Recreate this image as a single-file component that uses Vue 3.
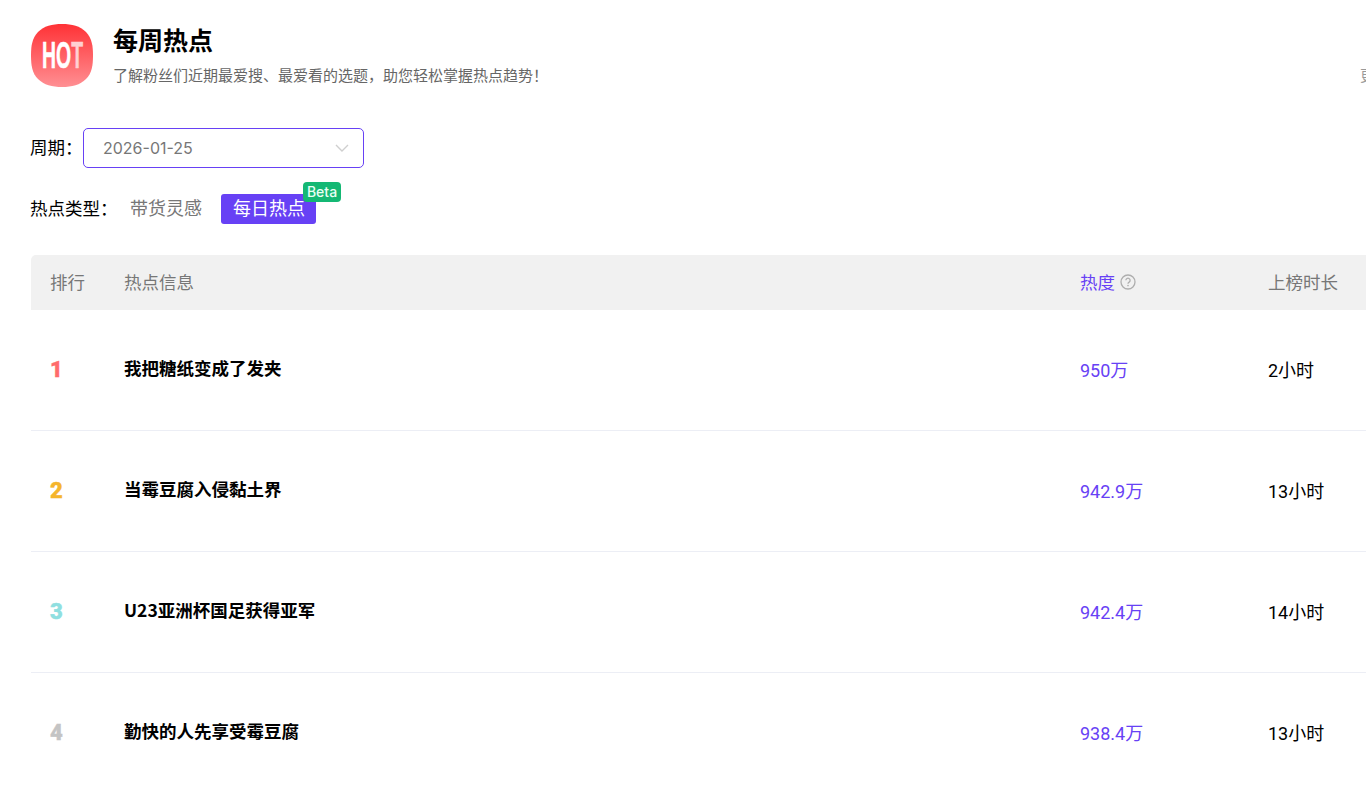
<script setup>
const rows = [
  { rank: 1, title: '我把糖纸变成了发夹', heat: '950万', time: '2小时', cls: 'r1' },
  { rank: 2, title: '当霉豆腐入侵黏土界', heat: '942.9万', time: '13小时', cls: 'r2' },
  { rank: 3, title: 'U23亚洲杯国足获得亚军', heat: '942.4万', time: '14小时', cls: 'r3' },
  { rank: 4, title: '勤快的人先享受霉豆腐', heat: '938.4万', time: '13小时', cls: 'r4' },
]
</script>

<template>
  <div class="viewport">
    <div class="page">
      <header class="head">
        <svg class="logo" width="62" height="63" viewBox="0 0 62 63">
          <defs>
            <linearGradient id="hotg" x1="0" y1="0" x2="0" y2="1">
              <stop offset="0" stop-color="#ff3236" />
              <stop offset="1" stop-color="#ff8f93" />
            </linearGradient>
          </defs>
          <path d="M31 0C41 0 49 2 55 8C61 14.500 62 22 62 31.500C62 41 61 49 55 55C49 61 41 63 31 63C21 63 13 61 7 55C1 49 0 41 0 31.500C0 22 1 14.500 7 8C13 2 21 0 31 0Z" fill="url(#hotg)" />
          <text x="11" y="44" textLength="41" lengthAdjust="spacingAndGlyphs" class="hot">HO<tspan class="hot-t">T</tspan></text>
        </svg>
        <div class="head-text">
          <h1 class="title">每周热点</h1>
          <div class="sub-row">
            <span class="sub">了解粉丝们近期最爱搜、最爱看的选题，助您轻松掌握热点趋势！</span>
            <span class="sub more">更新时间</span>
          </div>
        </div>
      </header>

      <div class="period">
        <span class="label">周期：</span>
        <div class="select">
          <span class="date">2026-01-25</span>
          <svg width="14" height="8" viewBox="0 0 14 8" class="chev"><path d="M1 1l6 6 6-6" fill="none" stroke="#cfcfcf" stroke-width="1.400" /></svg>
        </div>
      </div>

      <div class="types">
        <span class="label">热点类型：</span>
        <span class="tab">带货灵感</span>
        <span class="tab active">每日热点<span class="beta">Beta</span></span>
      </div>

      <div class="table">
        <div class="row thead">
          <div>排行</div>
          <div>热点信息</div>
          <div class="heat-h">热度
            <svg width="16" height="16" viewBox="0 0 16 16" class="q">
              <circle cx="8" cy="8" r="7" fill="none" stroke="#aeaeae" stroke-width="1.300" />
              <path d="M5.900 6.300a2.100 2.100 0 1 1 3.200 1.800c-.7.400-1.100.8-1.100 1.600" fill="none" stroke="#aeaeae" stroke-width="1.300" />
              <circle cx="8" cy="11.600" r=".8" fill="#aeaeae" />
            </svg>
          </div>
          <div>上榜时长</div>
        </div>
        <div v-for="r in rows" :key="r.rank" class="row tbody">
          <div class="rank" :class="r.cls">{{ r.rank }}</div>
          <div class="name">{{ r.title }}</div>
          <div class="heat">{{ r.heat }}</div>
          <div class="time">{{ r.time }}</div>
        </div>
      </div>
    </div>
  </div>
</template>

<style>
html, body { margin: 0; background: #fff; overflow: hidden; }
</style>

<style scoped>
.viewport {
  width: 1366px;
  height: 787px;
  overflow: hidden;
  background: #fff;
  font-family: "Noto Sans CJK SC", "Noto Sans", sans-serif;
  color: #000;
}
.page {
  width: 1600px;
  box-sizing: border-box;
  padding: 24px 0 0 30px;
}
.head { display: flex; align-items: flex-start; height: 63px; }
.logo { margin-left: 1px; flex: none; }
.hot { font-family: "Liberation Sans", sans-serif; font-weight: 700; font-size: 36px; fill: #fff; stroke: #fff; stroke-width: .5px; }
.hot-t { fill: #ffd0d2; stroke: #ffd0d2; }
.head-text { margin-left: 20px; flex: 1; }
.title { margin: 0; font-size: 25px; line-height: 34px; font-weight: 700; transform: translateY(-2px); }
.sub-row { display: flex; margin-top: 6px; width: 1247px; justify-content: space-between; white-space: nowrap; }
.sub { font-size: 15px; line-height: 22px; color: #666; }
.more { color: #999; width: 0; overflow: visible; }
.period { display: flex; align-items: center; margin-top: 41px; height: 40px; }
.label { font-size: 17.500px; line-height: 26px; padding-bottom: 2px; white-space: nowrap; flex: none; }
.period .label { width: 53px; }
.select {
  width: 281px;
  height: 40px;
  box-sizing: border-box;
  border: 1px solid #6741f5;
  border-radius: 5px;
  display: flex;
  align-items: center;
  justify-content: space-between;
  padding: 0 14px 0 19px;
}
.date { font-family: Inter, sans-serif; font-size: 16px; color: #777; }
.types { display: flex; align-items: center; margin-top: 26px; height: 30px; }
.types .label { width: 88px; }
.tab { font-size: 18px; line-height: 27px; color: #777; padding: 0 12px 3px; position: relative; white-space: nowrap; border-radius: 3px; }
.tab.active { background: #6741f5; color: #fff; margin-left: 7px; padding-right: 11px; }
.beta {
  position: absolute;
  left: 82px;
  top: -12px;
  width: 38px;
  height: 20px;
  background: #14b874;
  border-radius: 4px;
  font-family: Inter, sans-serif;
  font-size: 14px;
  font-weight: 500;
  line-height: 20px;
  text-align: center;
  color: #eafff5;
}
.table { margin-top: 31px; margin-left: 1px; }
.row {
  display: grid;
  grid-template-columns: 74px 956px 188px 1fr;
  align-items: center;
  box-sizing: border-box;
  padding-left: 19px;
}
.thead {
  height: 55px;
  background: #f1f1f1;
  border-radius: 5px 5px 0 0;
  font-size: 17.500px;
  color: #777;
  padding-bottom: 3px;
}
.tbody {
  height: 121px;
  border-bottom: 1px solid #eceef5;
}
.heat-h { color: #6741f5; display: flex; align-items: center; gap: 5px; }
.q { flex: none; margin-top: 2px; }
.rank { font-family: Roboto, sans-serif; font-weight: 900; font-size: 22px; line-height: 24px; margin-bottom: 1px; -webkit-text-stroke: .4px currentColor; }
.r1 { color: #ff6b6b; }
.r2 { color: #f5b52b; }
.r3 { color: #8fdfe0; }
.r4 { color: #c4c4c4; }
.name { font-size: 17.500px; font-weight: 700; margin-bottom: 5px; }
.heat { font-family: Roboto, "Noto Sans CJK SC", sans-serif; font-size: 18px; color: #6741f5; margin-bottom: 2px; }
.time { font-family: Roboto, "Noto Sans CJK SC", sans-serif; font-size: 18px; margin-bottom: 2px; }
</style>
